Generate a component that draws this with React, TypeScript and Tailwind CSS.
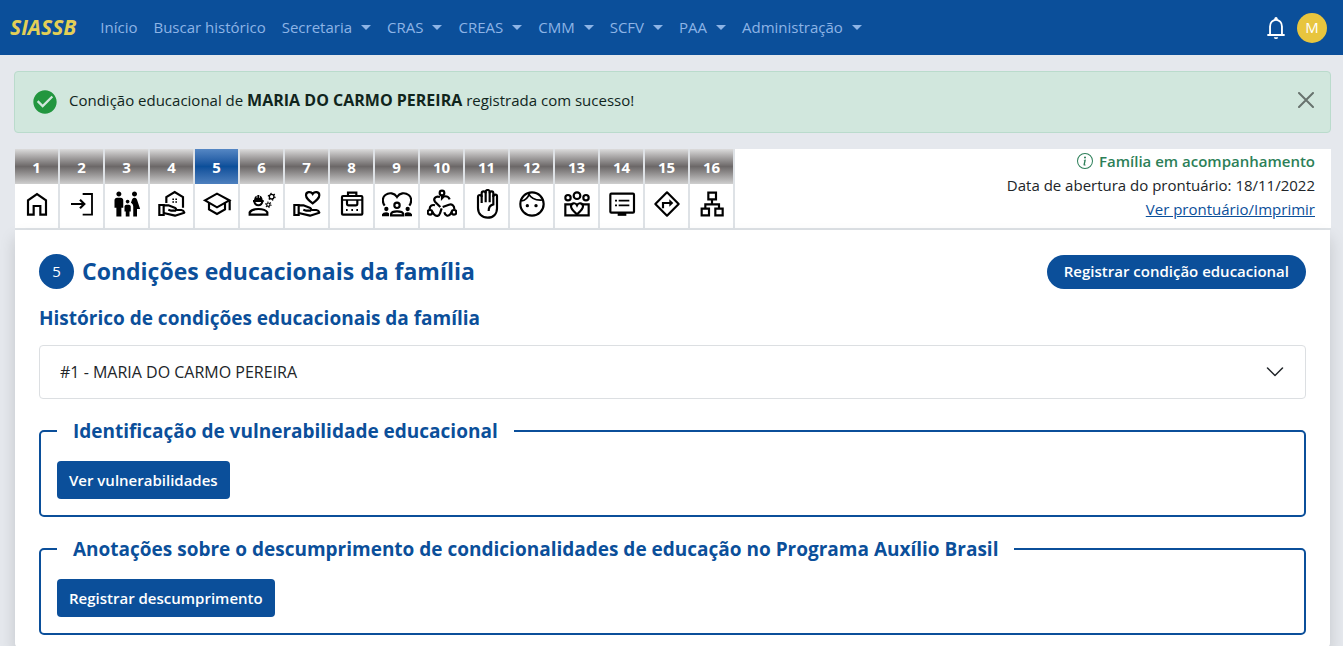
import type { ReactNode } from "react";
import { MdCheckCircle, MdFamilyRestroom } from "react-icons/md";
import { BsInfoCircle } from "react-icons/bs";

function LineIcon({ children }: { children: ReactNode }) {
  return (
    <svg
      viewBox="0 0 90 90"
      className="size-[30px]"
      fill="none"
      stroke="currentColor"
      strokeWidth="6.5"
      aria-hidden="true"
    >
      {children}
    </svg>
  );
}

function HomeIcon() {
  return (
    <LineIcon>
      <path d="M18 77V34L45 15L72 34V77H55V51H35V77Z" />
    </LineIcon>
  );
}

function EnterIcon() {
  return (
    <LineIcon>
      <path d="M12 45H51M39 32L52 45L39 58" />
      <path d="M47 15H75V77H47" strokeWidth="5.5" />
    </LineIcon>
  );
}

function OpenHand() {
  return (
    <>
      <path d="M7 48H20V78H7Z" />
      <path d="M20 49H34L55 57Q60 61 55 65H43L34 62" strokeLinejoin="round" />
      <path d="M58 63H73Q80 64 82 71L54 80L20 72" strokeLinejoin="round" />
    </>
  );
}

function HandHouseIcon() {
  return (
    <LineIcon>
      <path d="M28 42V24L53 9L78 24V56" />
      <path d="M46 31h5M55 31h5M46 39h5M55 39h5" strokeWidth="4.5" />
      <OpenHand />
    </LineIcon>
  );
}

function GraduationIcon() {
  return (
    <LineIcon>
      <path d="M9 34L45 14L82 34L45 55Z" />
      <path d="M21 41V61L45 75L69 61V41M83 33V64" />
    </LineIcon>
  );
}

function WorkerIcon() {
  return (
    <LineIcon>
      <path d="M8 77V70Q14 60 34 60Q55 60 61 70V77Z" />
      <path d="M22 36C22 53 46 53 46 36" />
      <path d="M18 33H50V39H18ZM21 33Q22 22 29 20V27H31V18H37V27H39V20Q46 22 47 33Z" fill="currentColor" stroke="none" />
      <circle cx="74" cy="23" r="7" strokeWidth="4" />
      <circle cx="74" cy="23" r="10" strokeWidth="4" strokeDasharray="4 6.470" />
      <circle cx="64" cy="47" r="5" strokeWidth="3.500" />
      <circle cx="64" cy="47" r="8" strokeWidth="3.500" strokeDasharray="3.500 4.880" />
    </LineIcon>
  );
}

function HandHeartIcon() {
  return (
    <LineIcon>
      <path d="M62 43C50 34 42 28 42 19C42 8 56 6 62 15C68 6 82 8 82 19C82 28 74 34 62 43Z" />
      <OpenHand />
    </LineIcon>
  );
}

function ToolboxIcon() {
  return (
    <LineIcon>
      <rect x="15" y="21" width="61" height="56" rx="3" />
      <path d="M33 21V11H58V21" />
      <path d="M15 33H76" strokeWidth="4.5" />
      <path d="M30 33V44Q30 49 35 49H56Q61 49 61 44V33" />
      <path d="M27 63h5M43 63h5M58 63h5" />
    </LineIcon>
  );
}

function FamilyHeartIcon() {
  return (
    <LineIcon>
      <path d="M8 50C-1 37 2 24 10 18C22 9 37 12 45 24C53 12 68 9 80 18C88 24 91 37 82 50" />
      <circle cx="45" cy="49" r="8" />
      <path d="M27 79V75Q29 67 45 67Q62 67 64 75V79Z" />
      <g fill="currentColor" stroke="none">
        <circle cx="13" cy="60" r="6.5" />
        <circle cx="77" cy="60" r="6.5" />
        <path d="M0 82V76Q3 70 12 70Q18 70 21 73V82ZM90 82V76Q87 70 78 70Q72 70 69 73V82Z" />
      </g>
    </LineIcon>
  );
}

function CircleOfPeopleIcon() {
  return (
    <LineIcon>
      <circle cx="45" cy="12" r="7" />
      <circle cx="9" cy="70" r="7" />
      <circle cx="81" cy="70" r="7" />
      <path d="M39 24C25 19 18 30 24 38L40 54" />
      <path d="M45 20V28L51 22C60 21 66 25 68 31" />
      <path d="M8 60C8 51 15 46 24 49" />
      <path d="M16 69L21 76C28 84 37 81 39 73L44 58" />
      <path d="M82 60C82 49 74 44 66 47L47 54" />
      <path d="M74 69L70 76C63 84 54 80 52 70" />
    </LineIcon>
  );
}

function RaisedHandIcon() {
  return (
    <LineIcon>
      <path d="M29 42V23Q29 18 24 18Q18 18 18 24V57C18 75 30 86 47 86C64 86 75 75 75 58V22Q75 17 70 17Q64 17 64 22V46C54 48 50 56 50 66" />
      <path d="M29 24V13Q29 7 35 7Q41 7 41 13V40" />
      <path d="M41 13V9Q41 3 47 3Q53 3 53 9V40" />
      <path d="M53 13Q53 7 59 7Q64 7 64 13V24" />
    </LineIcon>
  );
}

function FaceIcon() {
  return (
    <LineIcon>
      <circle cx="45" cy="45" r="35" />
      <path d="M13 36C26 34 34 24 38 11M34 13C42 28 56 35 77 33" strokeWidth="5" />
      <g fill="currentColor" stroke="none">
        <circle cx="31" cy="50" r="5" />
        <circle cx="57" cy="50" r="5" />
      </g>
    </LineIcon>
  );
}

function GroupHeartIcon() {
  return (
    <LineIcon>
      <circle cx="45" cy="20" r="10" />
      <circle cx="18" cy="26" r="8" />
      <circle cx="72" cy="26" r="8" />
      <path d="M28 46H10V79H80V46H62" />
      <path d="M45 76C36 68 27 61 27 52C27 42 40 39 45 49C50 39 63 42 63 52C63 61 54 68 45 76Z" />
    </LineIcon>
  );
}

function MonitorIcon() {
  return (
    <LineIcon>
      <rect x="10" y="14" width="71" height="57" rx="3" />
      <path d="M24 35h6M35 35H67M24 49h6M35 49H67" strokeWidth="5" />
      <path d="M32 76H58" strokeWidth="9" />
    </LineIcon>
  );
}

function TurnSignIcon() {
  return (
    <LineIcon>
      <path d="M45 10L80 45L45 80L10 45Z" strokeLinejoin="round" />
      <path d="M33 58V42H56" />
      <path d="M52 31L64 42L52 53Z" fill="currentColor" stroke="none" />
    </LineIcon>
  );
}

function NetworkIcon() {
  return (
    <LineIcon>
      <path d="M34 11H57V31H34ZM14 59H36V79H14ZM55 59H77V79H55Z" />
      <path d="M45 31V46M25 59V46H66V59" />
    </LineIcon>
  );
}

function BellIcon() {
  return (
    <svg viewBox="0 0 24 24" className="size-[26px]" fill="none" stroke="currentColor" strokeWidth="1.7" aria-hidden="true">
      <path d="M6.5 18V10.5C6.5 7 9 4.5 12 4.5S17.5 7 17.5 10.5V18M4 18.5H20" />
      <path d="M10.3 4.6Q10.3 1.8 12 1.8Q13.7 1.8 13.7 4.6ZM10 20.5H14Q13.7 22.2 12 22.2Q10.3 22.2 10 20.5Z" fill="currentColor" stroke="none" />
    </svg>
  );
}

const links: { label: string; menu?: boolean }[] = [
  { label: "Início" },
  { label: "Buscar histórico" },
  { label: "Secretaria", menu: true },
  { label: "CRAS", menu: true },
  { label: "CREAS", menu: true },
  { label: "CMM", menu: true },
  { label: "SCFV", menu: true },
  { label: "PAA", menu: true },
  { label: "Administração", menu: true },
];

const steps: { name: string; icon: ReactNode }[] = [
  { name: "Domicílio", icon: <HomeIcon /> },
  { name: "Ingresso", icon: <EnterIcon /> },
  { name: "Composição familiar", icon: <MdFamilyRestroom size={30} /> },
  { name: "Condições habitacionais", icon: <HandHouseIcon /> },
  { name: "Condições educacionais", icon: <GraduationIcon /> },
  { name: "Condições de trabalho", icon: <WorkerIcon /> },
  { name: "Condições de saúde", icon: <HandHeartIcon /> },
  { name: "Benefícios", icon: <ToolboxIcon /> },
  { name: "Convivência familiar", icon: <FamilyHeartIcon /> },
  { name: "Participação", icon: <CircleOfPeopleIcon /> },
  { name: "Violência", icon: <RaisedHandIcon /> },
  { name: "Medidas socioeducativas", icon: <FaceIcon /> },
  { name: "Acolhimento", icon: <GroupHeartIcon /> },
  { name: "Acompanhamento", icon: <MonitorIcon /> },
  { name: "Encaminhamentos", icon: <TurnSignIcon /> },
  { name: "Rede", icon: <NetworkIcon /> },
];

const currentStep = 5;

function NavBar() {
  return (
    <header className="flex h-[55px] items-center bg-[#0b4f9a] pl-2.5 pr-4">
      <a href="#" className="mr-4 text-[21px] font-bold italic text-[#e3cf57]">
        SIASSB
      </a>
      <nav className="flex flex-1 items-center text-[15px] text-[#8db4e6]">
        {links.map((link) =>
          link.menu ? (
            <button key={link.label} type="button" className="flex items-center gap-[9px] px-2">
              {link.label}
              <svg viewBox="0 0 10 5" className="h-[5px] w-2.5" fill="currentColor" aria-hidden="true">
                <path d="M0 0H10L5 5Z" />
              </svg>
            </button>
          ) : (
            <a key={link.label} href="#" className="px-2">
              {link.label}
            </a>
          ),
        )}
      </nav>
      <div className="flex items-center gap-2">
        <button type="button" aria-label="Notificações" className="text-white">
          <BellIcon />
        </button>
        <button
          type="button"
          className="flex size-[30px] items-center justify-center rounded-full bg-[#e8c53e] text-[15px] text-white"
        >
          M
        </button>
      </div>
    </header>
  );
}

function SuccessAlert() {
  return (
    <div
      role="alert"
      className="flex h-[62px] items-center rounded border border-[#badbcc] bg-[#d1e7dd] px-4 text-[#10251c]"
    >
      <MdCheckCircle size={28} className="mr-2.5 shrink-0 text-[#22963f]" />
      <p className="flex-1 pb-1 text-[15px]">
        Condição educacional de <strong className="text-base">MARIA DO CARMO PEREIRA</strong> registrada com sucesso!
      </p>
      <button type="button" aria-label="Fechar" className="pb-1 text-[#68736e]">
        <svg viewBox="0 0 16 16" className="size-4" fill="none" stroke="currentColor" strokeWidth="2" strokeLinecap="round">
          <path d="M1 1L15 15M15 1L1 15" />
        </svg>
      </button>
    </div>
  );
}

function StepStrip() {
  return (
    <div className="flex justify-between border-b-2 border-[#dee2e6] bg-white">
      <nav className="flex bg-white" aria-label="Etapas do prontuário">
        {steps.map((step, index) => {
          const active = index + 1 === currentStep;
          return (
            <a
              key={step.name}
              href="#"
              aria-label={step.name}
              className="flex w-[45px] flex-col border-r-2 border-[#dee2e6]"
            >
              <span
                className={
                  active
                    ? "flex h-[35px] items-center justify-center bg-linear-to-b from-[#5587c4] via-[#0b4f9a] to-[#4d80be] pt-0.5 text-[15px] font-bold text-white"
                    : "flex h-[35px] items-center justify-center bg-linear-to-b from-[#dcdcdc] via-[#6c6868] to-[#cfcfcf] pt-0.5 text-[15px] font-bold text-white"
                }
              >
                {index + 1}
              </span>
              <span className="flex h-11 items-center justify-center pb-1 text-black">{step.icon}</span>
            </a>
          );
        })}
      </nav>
      <div className="flex flex-col items-end pr-4 text-[15px] leading-6">
        <p className="flex items-center gap-1.5 font-semibold text-[#2c7f58]">
          <BsInfoCircle size={16} />
          Família em acompanhamento
        </p>
        <p>Data de abertura do prontuário: 18/11/2022</p>
        <a href="#" className="text-[#0b4f9a] underline">
          Ver prontuário/Imprimir
        </a>
      </div>
    </div>
  );
}

function ActionFieldset({ title, action }: { title: string; action: string }) {
  return (
    <fieldset className="mt-4 rounded-[5px] border-2 border-[#0b4f9a] px-4 pb-4 pt-3.5">
      <legend className="px-4 text-[19px] font-bold leading-8 text-[#0b4f9a]">{title}</legend>
      <button
        type="button"
        className="h-[38px] rounded bg-[#0b4f9a] px-3 text-[15px] font-semibold text-white"
      >
        {action}
      </button>
    </fieldset>
  );
}

export default function App() {
  return (
    <div className="flex min-h-screen flex-col bg-[#e5e8ed] font-['Open_Sans','Noto_Sans',sans-serif] text-[#212529]">
      <NavBar />
      <main className="flex flex-1 flex-col pl-3.5 pr-3 pt-4">
        <SuccessAlert />
        <div className="flex flex-1 flex-col pl-px pt-4">
          <StepStrip />
          <section className="mr-px flex-1 rounded-b bg-white px-6 pb-3 pt-6 shadow-[0_8px_16px_rgba(0,0,0,0.15)]">
            <div className="flex items-center justify-between">
              <h1 className="flex items-center gap-2 text-[23px] font-bold leading-[35px] text-[#0b4f9a]">
                <span className="flex size-[35px] items-center justify-center rounded-full bg-[#0b4f9a] text-[15px] font-normal text-white">
                  5
                </span>
                Condições educacionais da família
              </h1>
              <button
                type="button"
                className="h-[34px] rounded-full bg-[#0b4f9a] px-[17px] text-[15px] font-semibold text-white"
              >
                Registrar condição educacional
              </button>
            </div>
            <h2 className="mt-[15px] text-[19px] font-bold leading-7 text-[#0b4f9a]">
              Histórico de condições educacionais da família
            </h2>
            <button
              type="button"
              aria-expanded="false"
              className="mt-[13px] flex h-[54px] w-full items-center justify-between rounded border border-[#dcdfe2] bg-white px-5 text-base"
            >
              #1 - MARIA DO CARMO PEREIRA
              <svg viewBox="0 0 20 20" className="size-5" fill="none" stroke="currentColor" strokeWidth="1.5" strokeLinecap="round" strokeLinejoin="round" aria-hidden="true">
                <path d="M2.5 6L10 13.5L17.5 6" />
              </svg>
            </button>
            <ActionFieldset title="Identificação de vulnerabilidade educacional" action="Ver vulnerabilidades" />
            <ActionFieldset
              title="Anotações sobre o descumprimento de condicionalidades de educação no Programa Auxílio Brasil"
              action="Registrar descumprimento"
            />
          </section>
        </div>
      </main>
    </div>
  );
}
